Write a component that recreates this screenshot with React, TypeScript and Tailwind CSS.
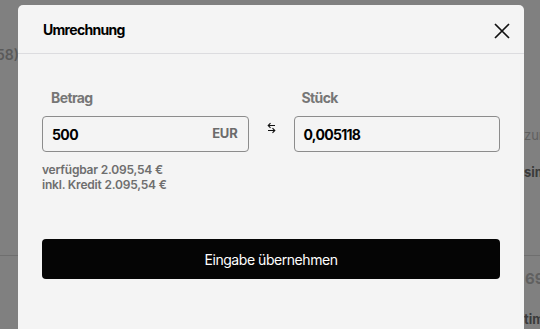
import React from "react";

export default function App() {
  return (
    <div
      className="relative w-[540px] h-[329px] overflow-hidden bg-[#808080]"
      style={{ fontFamily: "Inter, 'Noto Sans', sans-serif" }}
    >
      {/* underlying page (dimmed) */}
      <div className="absolute inset-0 text-[#4a4a4a]">
        <div className="absolute left-[-4px] top-[44px] text-[14px] font-semibold text-[#5a5a5a]">58)</div>
        <div className="absolute left-[524px] top-[126px] text-[13px] text-[#5f5f5f]">zun</div>
        <div className="absolute left-[524px] top-[163px] text-[13px] font-bold text-[#3a3a3a]">sim</div>
        <div className="absolute left-0 right-0 top-[255px] h-px bg-[#6f6f6f]" />
        <div className="absolute left-[525px] top-[268px] text-[15px] font-bold text-[#606060]">69</div>
        <div className="absolute left-[524px] top-[310px] text-[13px] font-bold text-[#3a3a3a]">tim</div>
      </div>

      {/* modal */}
      <div className="absolute left-[18px] top-[5px] w-[506px] h-[340px] bg-[#f4f4f4] rounded-[5px]">
        <div className="h-[49px] flex items-center justify-between pl-[25px] pr-[14px] border-b border-[#dcdcdf]">
          <span className="text-[14px] font-bold text-black tracking-[-0.7px]">Umrechnung</span>
          <svg width="16" height="16" viewBox="0 0 16 16" className="mt-[4px]">
            <path d="M1 1L15 15M15 1L1 15" stroke="#111" strokeWidth="1.7" fill="none" />
          </svg>
        </div>

        <div className="px-[24px] pt-[34px]">
          <div className="grid grid-cols-[1fr_45px_1fr] items-end">
            <div>
              <div className="pl-[9px] h-[20px] text-[14px] font-bold text-[#767676] leading-[20px] tracking-[-0.6px]">Betrag</div>
              <div className="mt-[8px] h-[36px] border border-[#8c8c8c] rounded-[4px] flex items-center justify-between pl-[9px] pr-[10px]">
                <span className="text-[14px] font-bold text-black tracking-[-0.6px]">500</span>
                <span className="text-[13px] font-bold text-[#6b6b6b] tracking-[-0.2px]">EUR</span>
              </div>
            </div>
            <div className="h-[36px] flex items-start justify-center pt-[6px]">
              <svg width="9" height="12" viewBox="0 0 9 12">
                <path d="M8 3.5H1.5M3.5 1.2L1.2 3.5L3.5 5.8" stroke="#111" strokeWidth="1.1" fill="none" />
                <path d="M1 8.5H7.5M5.5 6.2L7.8 8.5L5.5 10.8" stroke="#111" strokeWidth="1.1" fill="none" />
              </svg>
            </div>
            <div>
              <div className="pl-[8px] h-[20px] text-[14px] font-bold text-[#767676] leading-[20px] tracking-[-0.6px]">Stück</div>
              <div className="mt-[8px] h-[36px] border border-[#8c8c8c] rounded-[4px] flex items-center pl-[9px]">
                <span className="text-[14px] font-bold text-black tracking-[-0.7px]">0,005118</span>
              </div>
            </div>
          </div>

          <div className="mt-[10px] text-[12px] font-semibold text-[#6e6e6e] leading-[15px] tracking-[-0.2px]">
            <div>verfügbar 2.095,54 €</div>
            <div>inkl. Kredit 2.095,54 €</div>
          </div>

          <button className="mt-[47px] w-full h-[40px] bg-[#050505] rounded-[4px] text-white text-[14px] tracking-[-0.45px]">
            Eingabe übernehmen
          </button>
        </div>
      </div>
    </div>
  );
}
